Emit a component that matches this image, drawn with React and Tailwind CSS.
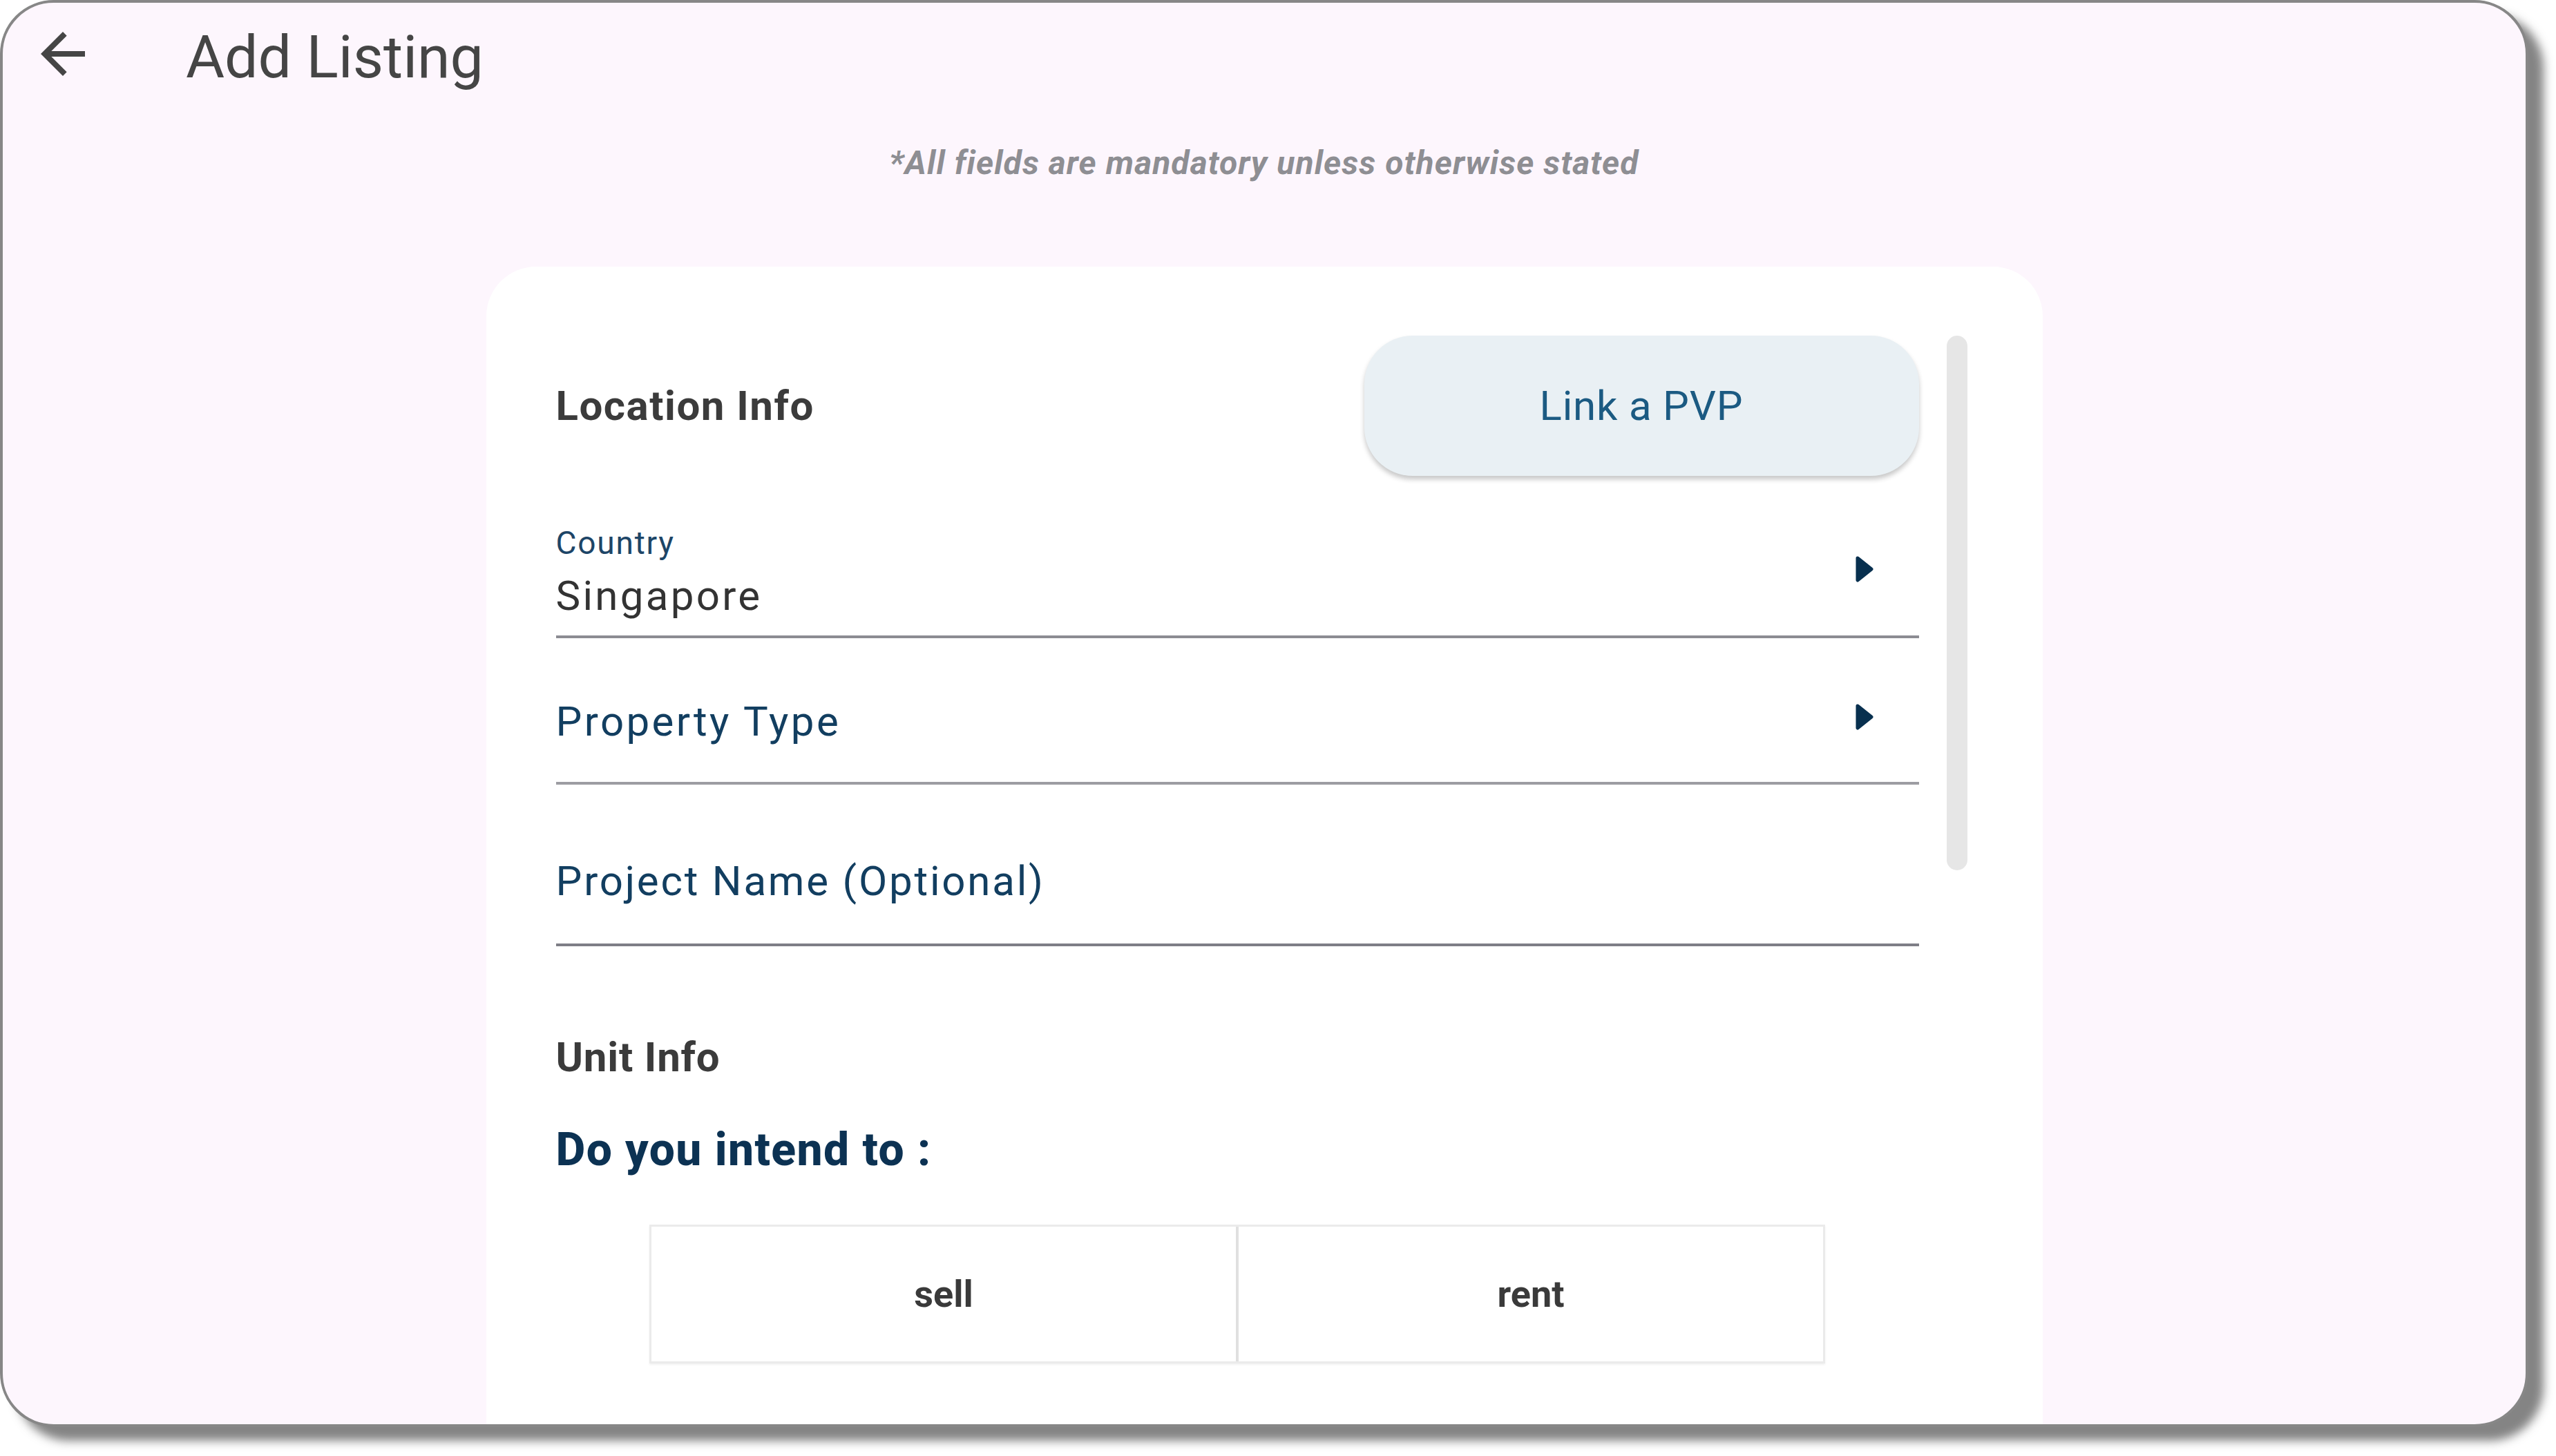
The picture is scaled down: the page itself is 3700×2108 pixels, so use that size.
import React, { useState } from 'react';

const ArrowBack = () => (
    <svg width="96" height="96" viewBox="0 0 24 24" fill="#454545">
        <path d="M20 11H7.83l5.59-5.59L12 4l-8 8 8 8 1.41-1.41L7.83 13H20v-2z" />
    </svg>
);

const Caret = () => (
    <svg width="26" height="38" viewBox="0 0 26 38" className="shrink-0">
        <path d="M3 3 L23 19 L3 35 Z" fill="#08304f" stroke="#08304f" strokeWidth="5" strokeLinejoin="round" />
    </svg>
);

const App = () => {
    const [intent, setIntent] = useState('');

    return (
        <div className="w-[3700px] h-[2108px] bg-white" style={{ fontFamily: 'Roboto, "Noto Sans", sans-serif' }}>
            <div className="w-[3660px] h-[2066px] rounded-[78px] border-4 border-[#878787] bg-[#fdf6fd] shadow-[22px_20px_14px_rgba(110,110,110,0.85)] overflow-hidden flex flex-col">
                {/* Header */}
                <div className="flex items-start pt-[26px] pl-[39px]">
                    <ArrowBack />
                    <h1 className="ml-[130px] mt-[10px] text-[86px] leading-none font-normal text-[#454545]">
                        Add Listing
                    </h1>
                </div>

                <p className="mt-[86px] text-center text-[48px] leading-none italic font-bold tracking-[1.1px] text-[#8e8e93]">
                    *All fields are mandatory unless otherwise stated
                </p>

                {/* Form card */}
                <div className="mt-[126px] mx-auto w-[2253px] flex-1 bg-white rounded-t-[72px] flex pl-[101px] pt-[100px]">
                    <div className="w-[1973px] flex flex-col">
                        {/* Location Info */}
                        <div className="flex items-center justify-between h-[203px]">
                            <h2 className="text-[60px] leading-none font-bold tracking-[1.5px] text-[#3b3b3b]">
                                Location Info
                            </h2>
                            <button className="w-[803px] h-[203px] rounded-[70px] bg-[#e9f0f4] shadow-[0_5px_7px_rgba(0,0,0,0.22)] text-[60px] leading-none text-[#1b5a82] tracking-[0.8px]">
                                Link a PVP
                            </button>
                        </div>

                        {/* Country */}
                        <div className="flex items-center justify-between pt-[74px] pb-[27px] border-b-4 border-[#8c8c92]">
                            <div className="flex flex-col">
                                <span className="text-[46px] leading-none tracking-[1.8px] text-[#1d4567]">Country</span>
                                <span className="mt-[24px] text-[60px] leading-none tracking-[3.3px] text-[#333333]">Singapore</span>
                            </div>
                            <div className="mr-[66px] mt-[-8px]">
                                <Caret />
                            </div>
                        </div>

                        {/* Property Type */}
                        <div className="flex items-center justify-between pt-[91px] pb-[57px] border-b-4 border-[#9c9ca2]">
                            <span className="text-[60px] leading-none tracking-[3.4px] text-[#123e60]">Property Type</span>
                            <div className="mr-[66px] mt-[-14px]">
                                <Caret />
                            </div>
                        </div>

                        {/* Project Name */}
                        <div className="pt-[110px] pb-[60px] border-b-4 border-[#7e7e86]">
                            <span className="text-[60px] leading-none tracking-[2.8px] text-[#123e60]">Project Name (Optional)</span>
                        </div>

                        {/* Unit Info */}
                        <h2 className="mt-[131px] text-[60px] leading-none font-bold tracking-[0.8px] text-[#3b3b3b]">
                            Unit Info
                        </h2>
                        <h3 className="mt-[71px] text-[66px] leading-none font-extrabold tracking-[1.4px] text-[#0c3253]">
                            Do you intend to :
                        </h3>

                        <div className="mt-[75px] mx-auto w-[1702px] h-[201px] flex border-[3px] border-[#ebebeb] shadow-[0_2px_3px_rgba(0,0,0,0.06)]">
                            <button
                                onClick={() => setIntent('sell')}
                                className={`flex-1 flex items-center justify-center text-[54px] leading-none font-bold text-[#3a3a3a] border-r-[4px] border-[#e0e0e0] ${intent === 'sell' ? 'bg-[#e9f0f4]' : 'bg-white'}`}
                            >
                                sell
                            </button>
                            <button
                                onClick={() => setIntent('rent')}
                                className={`flex-1 flex items-center justify-center text-[54px] leading-none font-bold text-[#3a3a3a] ${intent === 'rent' ? 'bg-[#e9f0f4]' : 'bg-white'}`}
                            >
                                rent
                            </button>
                        </div>
                    </div>

                    {/* Scrollbar */}
                    <div className="ml-[40px] w-[30px] h-[774px] rounded-full bg-[#e6e6e6]"></div>
                </div>
            </div>
        </div>
    );
};

export default App;
